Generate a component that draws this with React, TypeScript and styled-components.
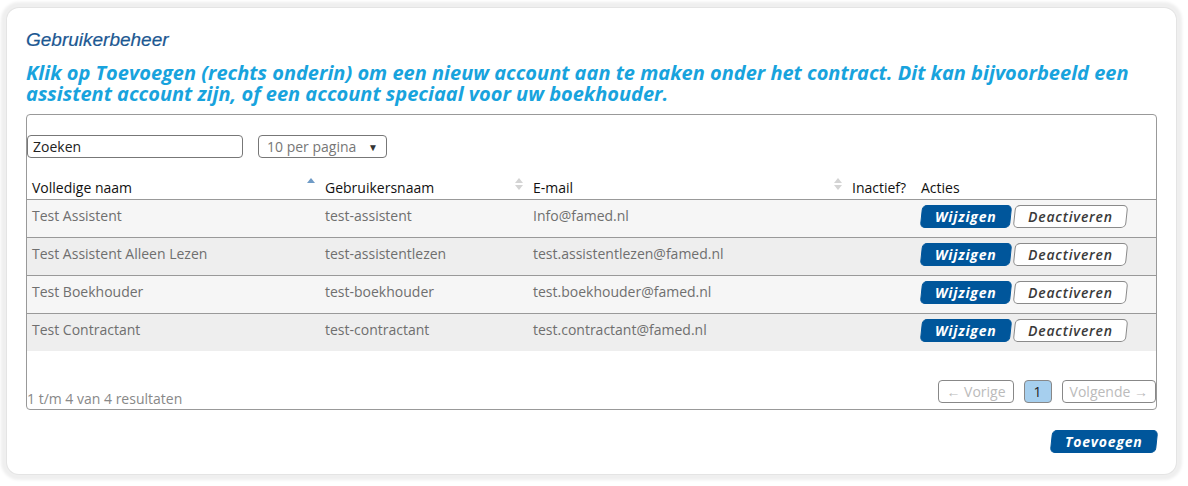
import React from "react";
import styled, { createGlobalStyle } from "styled-components";

const GlobalStyle = createGlobalStyle`
  html, body {
    margin: 0;
    padding: 0;
    background: #ffffff;
  }
  body {
    font-family: "Open Sans", "Liberation Sans", sans-serif;
  }
`;

const Page = styled.div`
  width: 1188px;
  height: 486px;
  padding: 8px 12px 12px 7px;
  box-sizing: border-box;
`;

const Card = styled.div`
  background: #fff;
  border-radius: 12px;
  box-shadow: 0 0 0 1px #e4e4e4, 0 0 3px 6px #efefef;
  padding: 20px 19px 20px 19px;
  height: 466px;
  box-sizing: border-box;
`;

const Title = styled.h2`
  margin: 0;
  font-family: "Liberation Sans", Arial, sans-serif;
  font-style: italic;
  font-weight: normal;
  font-size: 19px;
  color: #1c5892;
  line-height: 24px;
  -webkit-text-stroke: 0.2px #1c5892;
`;

const Intro = styled.p`
  margin: 10px 0 10px;
  font-family: "Open Sans", sans-serif;
  font-style: italic;
  font-weight: 700;
  font-size: 20px;
  line-height: 21px;
  color: #18a3dd;
`;

const TableBox = styled.div`
  border: 1px solid #999;
  border-radius: 4px;
  padding-top: 20px;
  height: 296px;
  box-sizing: border-box;
  display: flex;
  flex-direction: column;
`;

const Controls = styled.div`
  display: flex;
  align-items: center;
  gap: 15px;
  margin-bottom: 18px;
`;

const SearchInput = styled.input`
  width: 216px;
  height: 23px;
  box-sizing: border-box;
  border: 1px solid #777;
  border-radius: 4px;
  padding: 0 5px;
  font-family: "Open Sans", sans-serif;
  font-size: 14px;
  color: #222;
  &::placeholder {
    color: #222;
  }
`;

const SelectBox = styled.div`
  width: 129px;
  height: 23px;
  box-sizing: border-box;
  border: 1px solid #777;
  border-radius: 4px;
  padding: 0 8px;
  display: flex;
  align-items: center;
  justify-content: space-between;
  font-size: 14px;
  color: #777;
  span:last-child {
    font-size: 10px;
    color: #333;
  }
`;

const Table = styled.table`
  width: 100%;
  border-collapse: collapse;
  font-size: 14px;
`;

const Th = styled.th`
  text-align: left;
  font-weight: normal;
  color: #111;
  padding: 0 5px 1px;
  height: 22px;
  border-bottom: 1px solid #999;
  position: relative;
`;

const SortIcon = styled.span<{ $active?: boolean }>`
  position: absolute;
  right: 5px;
  top: 2px;
  display: flex;
  flex-direction: column;
  gap: 2px;
  i {
    display: block;
    width: 0;
    height: 0;
    border-left: 4px solid transparent;
    border-right: 4px solid transparent;
  }
  i:first-child {
    border-bottom: 5px solid ${(p) => (p.$active ? "#6f9bc6" : "#d4d4d4")};
  }
  i:last-child {
    border-top: 5px solid ${(p) => (p.$active ? "transparent" : "#d4d4d4")};
  }
`;

const Tr = styled.tr<{ $odd: boolean }>`
  background: ${(p) => (p.$odd ? "#f6f6f6" : "#eeeeee")};
`;

const Td = styled.td`
  color: #6f6f6f;
  padding: 6px 5px 0;
  height: 31px;
  vertical-align: top;
  border-top: 1px solid #999;
`;

const Actions = styled.div`
  display: flex;
  gap: 3px;
  margin-top: -1px;
`;

const Btn = styled.button<{ $primary?: boolean }>`
  height: 23px;
  padding: 0 13px;
  border-radius: 5px;
  transform: skewX(-6deg);
  font-family: "Open Sans", sans-serif;
  font-style: italic;
  font-weight: ${(p) => (p.$primary ? 700 : 600)};
  font-size: 14px;
  letter-spacing: 0.8px;
  cursor: pointer;
  border: 1px solid ${(p) => (p.$primary ? "#00569b" : "#8a8a8a")};
  background: ${(p) => (p.$primary ? "#00569b" : "#ffffff")};
  color: ${(p) => (p.$primary ? "#ffffff" : "#3a3a3a")};
  span {
    display: inline-block;
    transform: skewX(6deg);
  }
`;

const Footer = styled.div`
  margin-top: auto;
  display: flex;
  justify-content: space-between;
  align-items: flex-end;
  padding: 0 0 4px 0;
`;

const Info = styled.div`
  font-size: 14px;
  color: #888;
  margin-bottom: -3px;
`;

const Pager = styled.div`
  display: flex;
  gap: 10px;
  margin-bottom: 2px;
`;

const PageBtn = styled.div<{ $current?: boolean }>`
  height: 23px;
  box-sizing: border-box;
  padding: 0 ${(p) => (p.$current ? "9px" : "7px")};
  border: 1px solid #888;
  border-radius: 4px;
  display: flex;
  align-items: center;
  font-size: 14px;
  background: ${(p) => (p.$current ? "#a6cfee" : "#fff")};
  color: ${(p) => (p.$current ? "#222" : "#bbb")};
`;

const BottomBar = styled.div`
  display: flex;
  justify-content: flex-end;
  margin-top: 20px;
`;

const users = [
  ["Test Assistent", "test-assistent", "Info@famed.nl"],
  ["Test Assistent Alleen Lezen", "test-assistentlezen", "test.assistentlezen@famed.nl"],
  ["Test Boekhouder", "test-boekhouder", "test.boekhouder@famed.nl"],
  ["Test Contractant", "test-contractant", "test.contractant@famed.nl"],
];

export default function App() {
  return (
    <Page>
      <GlobalStyle />
      <Card>
        <Title>Gebruikerbeheer</Title>
        <Intro>
          Klik op Toevoegen (rechts onderin) om een nieuw account aan te maken onder het contract. Dit kan
          bijvoorbeeld een assistent account zijn, of een account speciaal voor uw boekhouder.
        </Intro>
        <TableBox>
          <Controls>
            <SearchInput placeholder="Zoeken" />
            <SelectBox>
              <span>10 per pagina</span>
              <span>▼</span>
            </SelectBox>
          </Controls>
          <Table>
            <colgroup>
              <col style={{ width: 293 }} />
              <col style={{ width: 208 }} />
              <col style={{ width: 319 }} />
              <col style={{ width: 69 }} />
              <col />
            </colgroup>
            <thead>
              <tr>
                <Th>
                  Volledige naam
                  <SortIcon $active>
                    <i />
                    <i />
                  </SortIcon>
                </Th>
                <Th>
                  Gebruikersnaam
                  <SortIcon>
                    <i />
                    <i />
                  </SortIcon>
                </Th>
                <Th>
                  E-mail
                  <SortIcon>
                    <i />
                    <i />
                  </SortIcon>
                </Th>
                <Th>Inactief?</Th>
                <Th>Acties</Th>
              </tr>
            </thead>
            <tbody>
              {users.map((u, i) => (
                <Tr key={u[1]} $odd={i % 2 === 0}>
                  <Td>{u[0]}</Td>
                  <Td>{u[1]}</Td>
                  <Td>{u[2]}</Td>
                  <Td />
                  <Td>
                    <Actions>
                      <Btn $primary>
                        <span>Wijzigen</span>
                      </Btn>
                      <Btn>
                        <span>Deactiveren</span>
                      </Btn>
                    </Actions>
                  </Td>
                </Tr>
              ))}
            </tbody>
          </Table>
          <Footer>
            <Info>1 t/m 4 van 4 resultaten</Info>
            <Pager>
              <PageBtn>← Vorige</PageBtn>
              <PageBtn $current>1</PageBtn>
              <PageBtn>Volgende →</PageBtn>
            </Pager>
          </Footer>
        </TableBox>
        <BottomBar>
          <Btn $primary>
            <span>Toevoegen</span>
          </Btn>
        </BottomBar>
      </Card>
    </Page>
  );
}
